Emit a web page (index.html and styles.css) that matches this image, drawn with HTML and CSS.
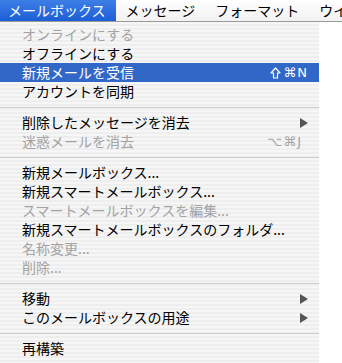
FILE: index.html
```html
<!DOCTYPE html>
<html lang="ja">
<head>
    <meta charset="UTF-8">
    <title>メールボックス</title>
    <link rel="stylesheet" href="styles.css">
</head>
<body>

<div class="menubar">
    <span class="menubar-item active">メールボックス</span>
    <span class="menubar-item">メッセージ</span>
    <span class="menubar-item">フォーマット</span>
    <span class="menubar-item">ウインドウ</span>
</div>

<div class="menu">
    <div class="item disabled">オンラインにする</div>
    <div class="item">オフラインにする</div>
    <div class="item selected">新規メールを受信
        <span class="key">
            <svg class="shift" width="11" height="12" viewBox="0 0 11 12">
                <path d="M5.5 1 L10 6 L7.5 6 L7.5 11 L3.5 11 L3.5 6 L1 6 Z" fill="none" stroke="#fff" stroke-width="1.2" stroke-linejoin="round"/>
            </svg>⌘N</span>
    </div>
    <div class="item">アカウントを同期</div>
    <div class="sep"></div>
    <div class="item">削除したメッセージを消去<span class="arrow"></span></div>
    <div class="item disabled">迷惑メールを消去<span class="key key-j">⌥⌘J</span></div>
    <div class="sep"></div>
    <div class="item">新規メールボックス...</div>
    <div class="item">新規スマートメールボックス...</div>
    <div class="item disabled">スマートメールボックスを編集...</div>
    <div class="item">新規スマートメールボックスのフォルダ...</div>
    <div class="item disabled">名称変更...</div>
    <div class="item disabled">削除...</div>
    <div class="sep"></div>
    <div class="item">移動<span class="arrow"></span></div>
    <div class="item">このメールボックスの用途<span class="arrow"></span></div>
    <div class="sep"></div>
    <div class="item">再構築</div>
</div>

</body>
</html>
```

FILE: styles.css
```css
body {
    margin: 0;
    padding: 0;
    background-color: #fff;
    font-family: "Noto Sans CJK JP", sans-serif;
    font-size: 14px;
    color: #000;
    overflow: hidden;
}

/* top menu bar */
.menubar {
    display: flex;
    height: 21px;
    background: linear-gradient(#ffffff, #f1f1f1);
    border-bottom: 1px solid #9a9a9a;
    white-space: nowrap;
    overflow: hidden;
}

.menubar-item {
    padding: 0 8px;
    margin-right: 4px;
    line-height: 21px;
}

.menubar-item.active {
    padding-right: 10px;
    margin-right: 2px;
    background: linear-gradient(#3d7ee6, #1c5fd6);
    color: #fff;
}

/* dropdown */
.menu {
    width: 319px;
    padding: 3px 0 6px 0;
    background: repeating-linear-gradient(#f6f6f6 0, #f6f6f6 2px, #eeeeee 2px, #eeeeee 4px);
}

.item {
    display: flex;
    align-items: center;
    height: 19px;
    line-height: 19px;
    padding: 0 11px 0 22px;
    white-space: nowrap;
}

.item.disabled {
    color: #a3a3a3;
}

.item.selected {
    background-color: #3168c8;
    color: #fff;
}

.key {
    display: flex;
    align-items: center;
    margin-left: auto;
    font-family: "DejaVu Sans", "Noto Sans CJK JP", sans-serif;
    font-size: 13px;
    letter-spacing: 1px;
}

.shift {
    margin-right: 2px;
}

.key-j {
    margin-right: 6px;
}

.arrow {
    margin-left: auto;
    width: 0;
    height: 0;
    border-top: 5px solid transparent;
    border-bottom: 5px solid transparent;
    border-left: 8px solid #555;
}

.sep {
    height: 12px;
    display: flex;
    align-items: center;
}

.sep::after {
    content: "";
    flex: 1;
    height: 1px;
    background-color: #cdcdcd;
}
```
